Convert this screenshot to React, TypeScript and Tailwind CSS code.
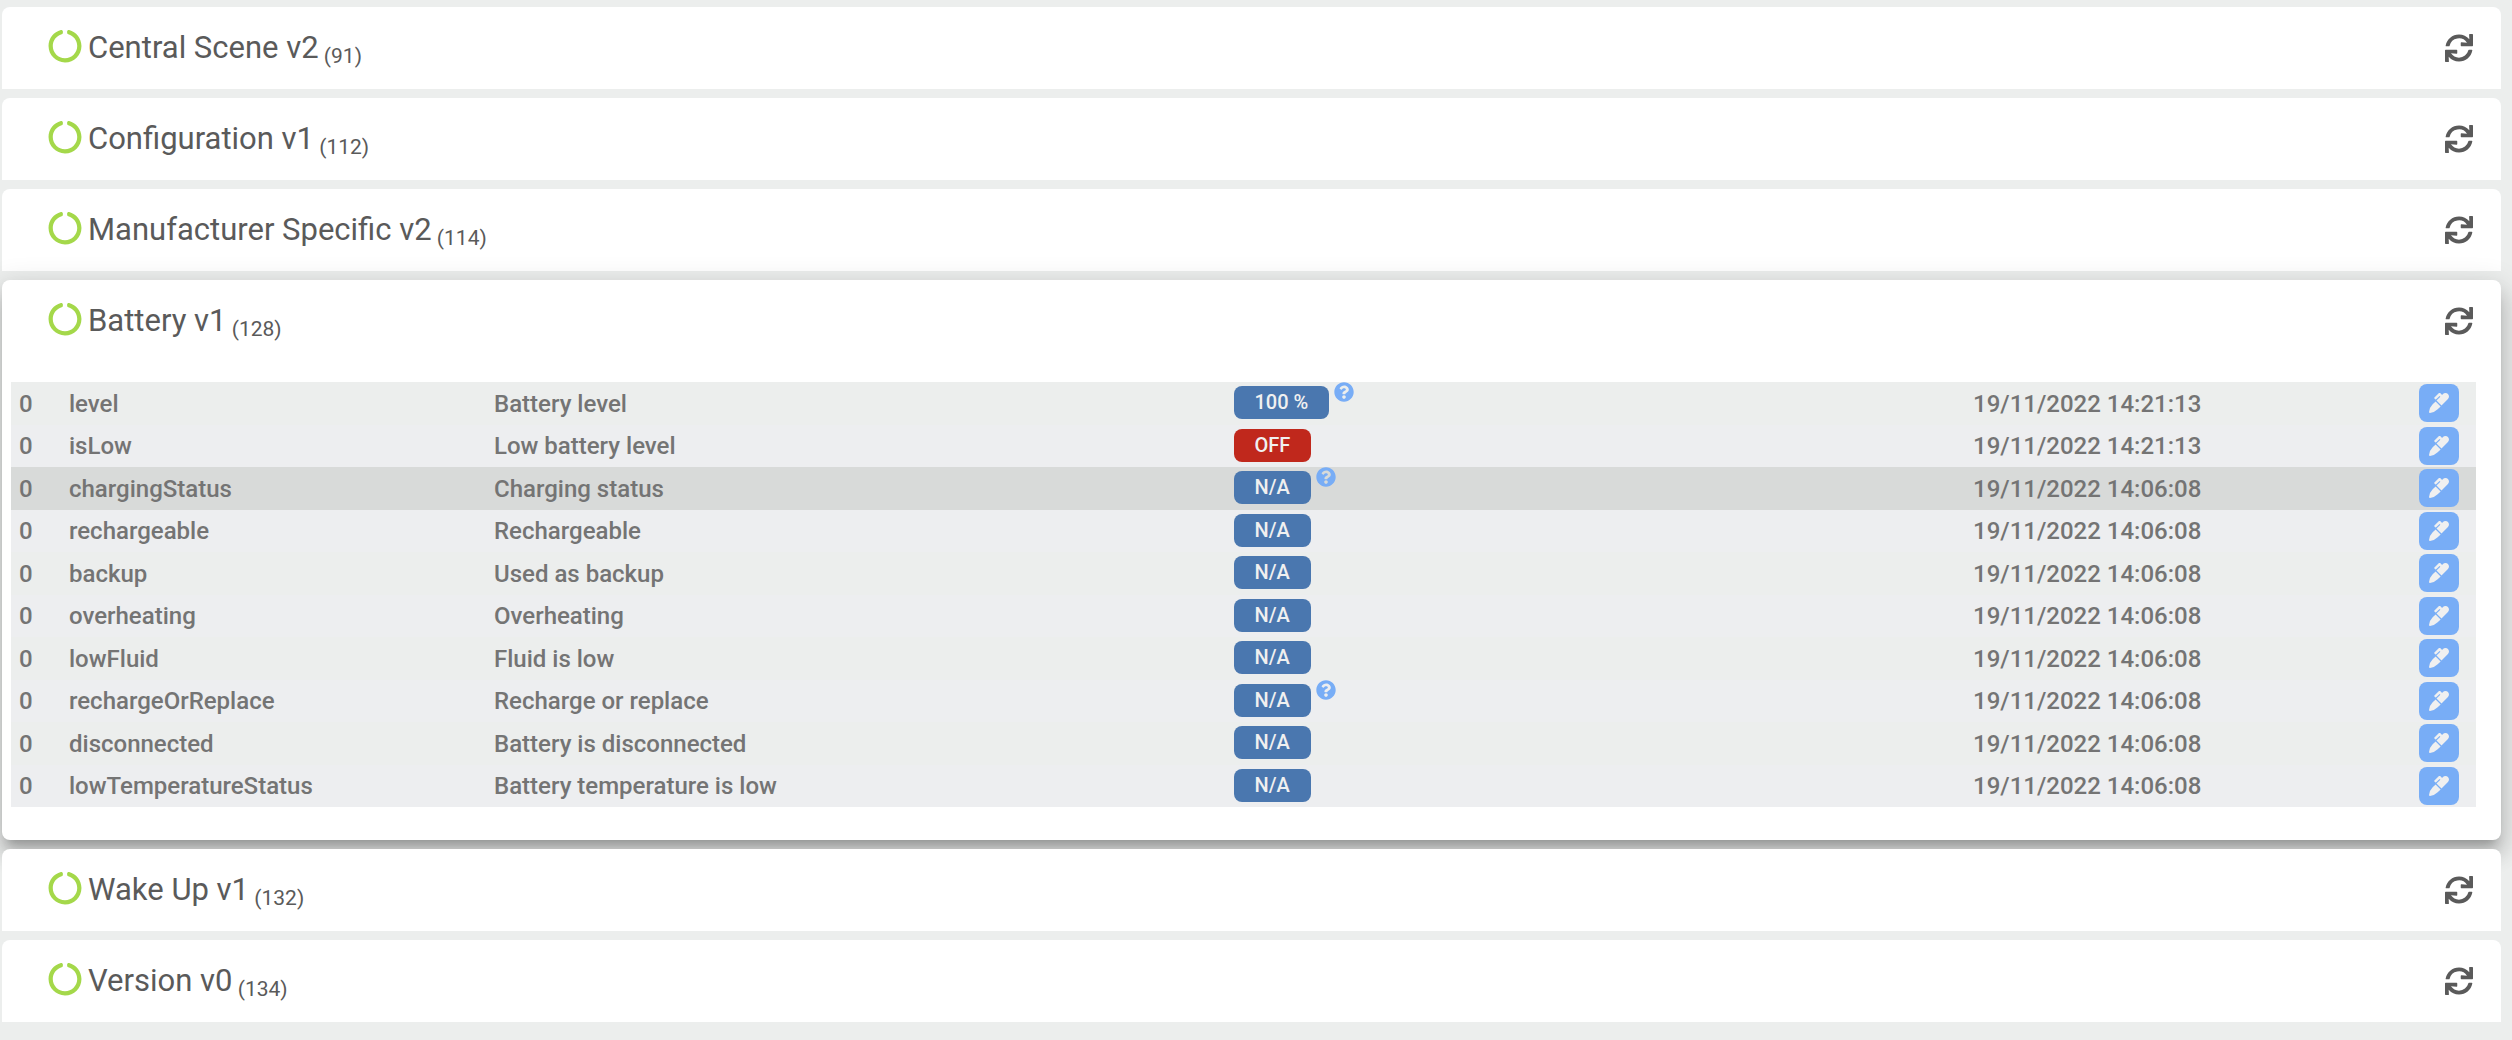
import { FaCircleNotch, FaMarker, FaQuestionCircle, FaSync } from "react-icons/fa";
import clsx from "clsx";

type Value = {
  property: string;
  label: string;
  value: string;
  date: string;
  help?: boolean;
  off?: boolean;
  active?: boolean;
};

type CommandClass = {
  id: number;
  name: string;
  values?: Value[];
};

const batteryValues: Value[] = [
  { property: "level", label: "Battery level", value: "100 %", date: "19/11/2022 14:21:13", help: true },
  { property: "isLow", label: "Low battery level", value: "OFF", date: "19/11/2022 14:21:13", off: true },
  { property: "chargingStatus", label: "Charging status", value: "N/A", date: "19/11/2022 14:06:08", help: true, active: true },
  { property: "rechargeable", label: "Rechargeable", value: "N/A", date: "19/11/2022 14:06:08" },
  { property: "backup", label: "Used as backup", value: "N/A", date: "19/11/2022 14:06:08" },
  { property: "overheating", label: "Overheating", value: "N/A", date: "19/11/2022 14:06:08" },
  { property: "lowFluid", label: "Fluid is low", value: "N/A", date: "19/11/2022 14:06:08" },
  { property: "rechargeOrReplace", label: "Recharge or replace", value: "N/A", date: "19/11/2022 14:06:08", help: true },
  { property: "disconnected", label: "Battery is disconnected", value: "N/A", date: "19/11/2022 14:06:08" },
  { property: "lowTemperatureStatus", label: "Battery temperature is low", value: "N/A", date: "19/11/2022 14:06:08" },
];

const commandClasses: CommandClass[] = [
  { id: 91, name: "Central Scene v2" },
  { id: 112, name: "Configuration v1" },
  { id: 114, name: "Manufacturer Specific v2" },
  { id: 128, name: "Battery v1", values: batteryValues },
  { id: 132, name: "Wake Up v1" },
  { id: 134, name: "Version v0" },
];

function ValueRow({ item }: { item: Value }) {
  return (
    <tr
      className={clsx(
        "odd:h-[43px] even:h-[42px]",
        item.active ? "bg-[#d8dad9]" : "odd:bg-[#eceeed] even:bg-[#edeef0]",
      )}
    >
      <td className="pl-2">0</td>
      <td className="pl-2">{item.property}</td>
      <td className="pl-2">{item.label}</td>
      <td className="pl-2 align-top">
        <div className="flex items-start gap-[5px]">
          <span
            className={clsx(
              "mt-1 rounded-lg px-[21px] text-[20px] leading-[33px] text-[#f0f0f0]",
              item.off ? "bg-[#c0281c]" : "bg-[#4a77af]",
            )}
          >
            {item.value}
          </span>
          {item.help && <FaQuestionCircle className="size-5 text-[#78adf6]" />}
        </div>
      </td>
      <td className="pl-2">{item.date}</td>
      <td className="pt-0.5 pr-[17px] align-top">
        <button
          type="button"
          aria-label={`Edit ${item.property}`}
          className="ml-auto flex h-[38px] w-10 items-center justify-center rounded-lg bg-[#78adf6] text-[#f0f0f0]"
        >
          <FaMarker className="size-5" />
        </button>
      </td>
    </tr>
  );
}

function Panel({ item }: { item: CommandClass }) {
  return (
    <section
      className={clsx(
        "relative bg-white",
        item.values
          ? "rounded-lg pb-[33px] shadow-[0_10px_10px_-6px_rgba(0,0,0,0.2),0_16px_20px_2px_rgba(0,0,0,0.14),0_6px_28px_4px_rgba(0,0,0,0.12)]"
          : "rounded-t-lg",
      )}
    >
      <header className="flex h-[82px] items-center justify-between pr-7 pl-[46px] text-[#5a5a5a]">
        <h2 className="flex items-center text-[31px] leading-10">
          <FaCircleNotch className="mr-1.5 mb-1 size-[34px] text-[#a4d84a]" />
          <span>
            {item.name}
            <sub className="text-[21px]"> ({item.id})</sub>
          </span>
        </h2>
        <button type="button" aria-label={`Refresh ${item.name}`}>
          <FaSync className="size-7" />
        </button>
      </header>
      {item.values && (
        <div className="pt-5 pr-[25px] pl-[9px]">
          <table className="w-full table-fixed border-collapse text-[24px] leading-8 font-medium text-[#747474]">
            <colgroup>
              <col className="w-[50px]" />
              <col className="w-[425px]" />
              <col className="w-[30%]" />
              <col className="w-[30%]" />
              <col />
              <col className="w-[65px]" />
            </colgroup>
            <tbody>
              {item.values.map((value) => (
                <ValueRow key={value.property} item={value} />
              ))}
            </tbody>
          </table>
        </div>
      )}
    </section>
  );
}

export default function App() {
  return (
    <main className="flex min-h-screen flex-col gap-[9px] bg-[#eceeed] pt-[7px] pr-[11px] pl-0.5 font-[Roboto,sans-serif]">
      {commandClasses.map((item) => (
        <Panel key={item.id} item={item} />
      ))}
    </main>
  );
}
